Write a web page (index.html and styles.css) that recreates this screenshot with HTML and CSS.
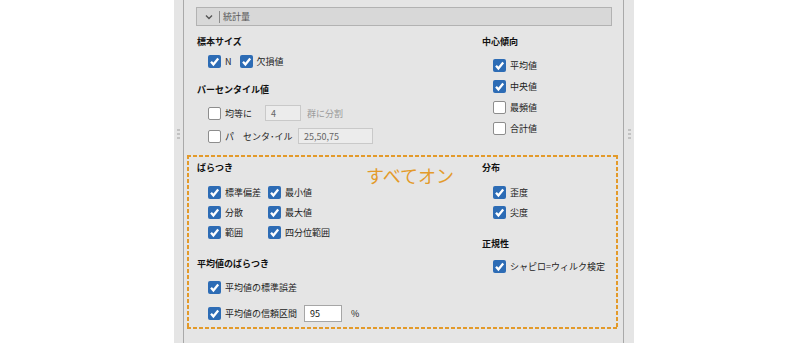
FILE: index.html
```html
<!DOCTYPE html>
<html lang="ja">
<head>
    <meta charset="UTF-8">
    <meta name="viewport" content="width=device-width, initial-scale=1.0">
    <title>統計量</title>
    <link rel="stylesheet" href="styles.css">
</head>
<body>
<div class="panel">
    <div class="gutter"><span class="grip"></span><span class="grip"></span><span class="grip"></span></div>

    <div class="content">
        <div class="section-head">
            <svg class="chevron" width="8" height="6" viewBox="0 0 8 6"><polyline points="1,1.5 4,4.5 7,1.5" fill="none" stroke="#555" stroke-width="1.4"/></svg>
            <span class="sep"></span>
            <span class="section-title">統計量</span>
        </div>

        <div class="cols">
            <div class="col">
                <div class="heading">標本サイズ</div>
                <div class="row">
                    <span class="cb on"></span><span class="lbl">N</span>
                    <span class="cb on second"></span><span class="lbl">欠損値</span>
                </div>
                <div class="heading gap8">パーセンタイル値</div>
                <div class="row gap4">
                    <span class="cb"></span><span class="lbl w-equal">均等に</span>
                    <span class="field dim narrow">4</span>
                    <span class="lbl dim-text">群に分割</span>
                </div>
                <div class="row gap3">
                    <span class="cb"></span><span class="lbl w-pct">パ　センタ･イル</span>
                    <span class="field dim wide">25,50,75</span>
                </div>
            </div>
            <div class="col">
                <div class="heading">中心傾向</div>
                <div class="list gap4">
                    <div class="row tall"><span class="cb on"></span><span class="lbl">平均値</span></div>
                    <div class="row tall"><span class="cb on"></span><span class="lbl">中央値</span></div>
                    <div class="row tall"><span class="cb"></span><span class="lbl">最頻値</span></div>
                    <div class="row tall"><span class="cb"></span><span class="lbl">合計値</span></div>
                </div>
            </div>
        </div>

        <div class="marked">
            <div class="note">すべてオン</div>
            <div class="cols inner">
                <div class="col">
                    <div class="heading">ばらつき</div>
                    <div class="pair gap5">
                        <div class="list">
                            <div class="row"><span class="cb on"></span><span class="lbl">標準偏差</span></div>
                            <div class="row"><span class="cb on"></span><span class="lbl">分散</span></div>
                            <div class="row"><span class="cb on"></span><span class="lbl">範囲</span></div>
                        </div>
                        <div class="list">
                            <div class="row"><span class="cb on"></span><span class="lbl">最小値</span></div>
                            <div class="row"><span class="cb on"></span><span class="lbl">最大値</span></div>
                            <div class="row"><span class="cb on"></span><span class="lbl">四分位範囲</span></div>
                        </div>
                    </div>
                    <div class="heading gap11">平均値のばらつき</div>
                    <div class="row gap4"><span class="cb on"></span><span class="lbl">平均値の標準誤差</span></div>
                    <div class="row gap6">
                        <span class="cb on"></span><span class="lbl w-ci">平均値の信頼区間</span>
                        <span class="field live">95</span>
                        <span class="lbl pct">%</span>
                    </div>
                </div>
                <div class="col">
                    <div class="heading">分布</div>
                    <div class="list gap5">
                        <div class="row"><span class="cb on"></span><span class="lbl">歪度</span></div>
                        <div class="row"><span class="cb on"></span><span class="lbl">尖度</span></div>
                    </div>
                    <div class="heading gap11">正規性</div>
                    <div class="row gap3"><span class="cb on"></span><span class="lbl">シャピロ=ウィルク検定</span></div>
                </div>
            </div>
        </div>
    </div>

    <div class="gutter right"><span class="grip"></span><span class="grip"></span><span class="grip"></span></div>
</div>
</body>
</html>
```

FILE: styles.css
```css
body { margin: 0; background: #fff; font-family: "Noto Sans CJK JP", "Noto Sans", sans-serif; font-size: 9px; color: #222; }

.panel { margin-left: 174px; width: 460px; height: 343px; display: flex; background: #e5e5e5; }
.gutter { width: 9px; display: flex; flex-direction: column; align-items: center; padding-top: 129px; gap: 2px; box-sizing: border-box; }
.gutter.right { width: 10px; }
.grip { width: 3px; height: 2px; background: #c2c2c2; }

.content { flex: 1; border-left: 1px solid #a9a9a9; border-right: 1px solid #a9a9a9; padding-top: 7px; }

.section-head { margin: 0 11px 0 12px; height: 17px; border: 1px solid #b2b2b2; background: #d8d8d8; display: flex; align-items: center; }
.chevron { margin-left: 8px; }
.sep { width: 1px; height: 12px; background: #8c8c8c; margin-left: 6px; }
.section-title { margin-left: 3px; color: #555; }

.cols { display: grid; grid-template-columns: 285px 1fr; padding-left: 13px; }
.cols.inner { padding-left: 8px; }
.col { display: flex; flex-direction: column; }

.heading { height: 20px; display: flex; align-items: center; font-weight: bold; color: #111; }
.cols > .col > .heading:first-child { margin-top: 5px; }
.inner > .col > .heading:first-child { margin-top: 0; }

.row { height: 20px; display: flex; align-items: center; padding-left: 11px; }
.row.tall { height: 21px; }
.pair { display: grid; grid-template-columns: 71px 1fr; }
.pair .list + .list .row { padding-left: 0; }

.gap3 { margin-top: 3px; }
.gap4 { margin-top: 4px; }
.gap5 { margin-top: 5px; }
.gap6 { margin-top: 6px; }
.gap8 { margin-top: 8px; }
.gap11 { margin-top: 11px; }

.cb { width: 13px; height: 13px; box-sizing: border-box; border-radius: 2px; background: #fff; border: 1px solid #8d8d8d; flex-shrink: 0; }
.cb.on { border: none; background: #2d6cb5 url("data:image/svg+xml,%3Csvg xmlns='http://www.w3.org/2000/svg' width='13' height='13' viewBox='0 0 13 13'%3E%3Cpolyline points='3,6.8 5.4,9.4 10.2,3.6' fill='none' stroke='%23fff' stroke-width='2.3'/%3E%3C/svg%3E") center / 13px 13px no-repeat; }
.cb.second { margin-left: 8px; }
.lbl { margin-left: 4px; white-space: nowrap; }

.w-equal { width: 40px; }
.w-pct { width: 73px; }
.w-ci { width: 79px; }
.dim-text { color: #9b9b9b; margin-left: 6px; }
.pct { margin-left: 9px; }

.field { height: 16px; box-sizing: border-box; display: flex; align-items: center; padding-left: 5px; border: 1px solid #c9c9c9; }
.field.dim { background: #ececec; color: #666; }
.field.narrow { width: 36px; }
.field.wide { width: 75px; }
.field.live { width: 38px; height: 17px; background: #fff; border-color: #a6a6a6; color: #111; }

.marked { position: relative; margin: 9px 5px 0 3px; padding-bottom: 4px; border: 2px solid transparent;
    background:
        repeating-linear-gradient(90deg, #e39a2a 0 4px, transparent 4px 6px) top left / 100% 2px no-repeat border-box,
        repeating-linear-gradient(90deg, #e39a2a 0 4px, transparent 4px 6px) bottom left / 100% 2px no-repeat border-box,
        repeating-linear-gradient(180deg, #e39a2a 0 4px, transparent 4px 6px) top left / 2px 100% no-repeat border-box,
        repeating-linear-gradient(180deg, #e39a2a 0 4px, transparent 4px 6px) top right / 2px 100% no-repeat border-box; }
.note { position: absolute; left: 177px; top: 6px; font-size: 18px; color: #e39a2a; line-height: 24px; }
```
